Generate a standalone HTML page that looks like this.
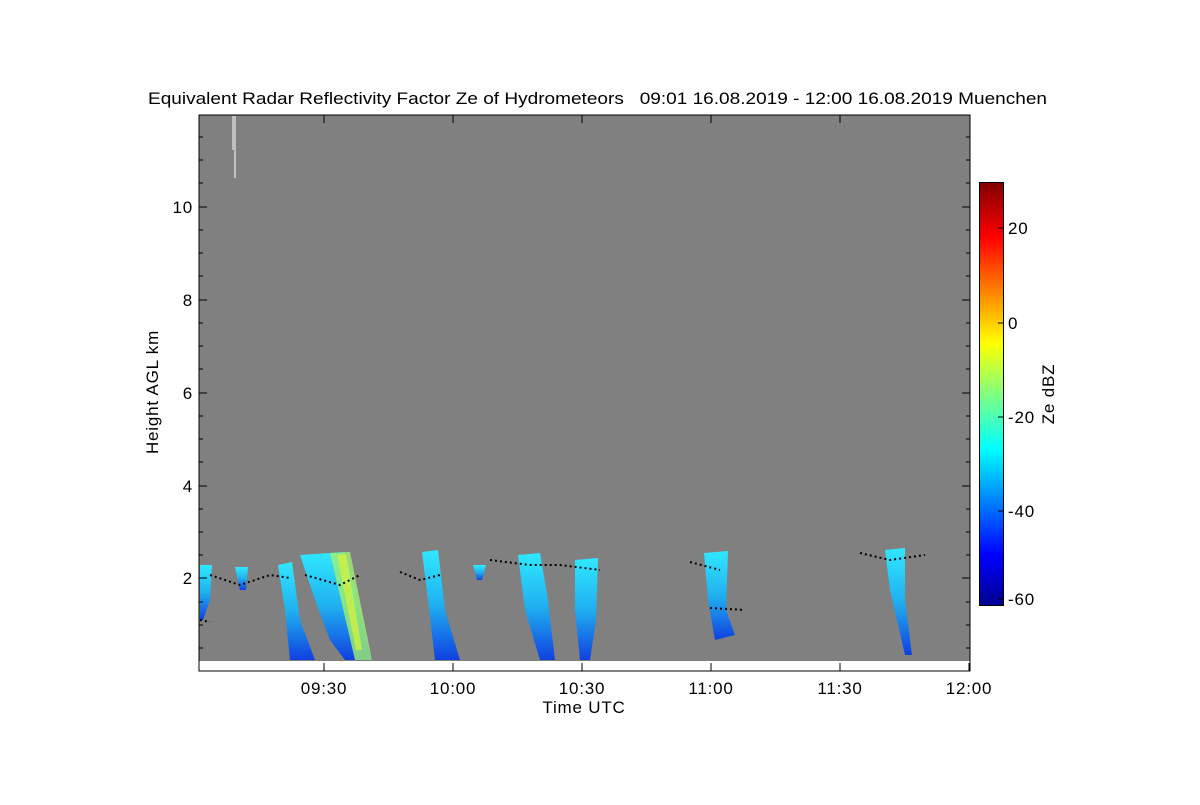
<!DOCTYPE html>
<html><head><style>
body{margin:0;background:#fff;width:1200px;height:800px;overflow:hidden;font-family:"Liberation Sans",sans-serif}
</style></head><body>
<svg width="1200" height="800" xmlns="http://www.w3.org/2000/svg" font-family="Liberation Sans, sans-serif" font-size="17" letter-spacing="0.8">
<defs>
<linearGradient id="jet" x1="0" y1="1" x2="0" y2="0">
<stop offset="0" stop-color="#00008f"/><stop offset="0.12" stop-color="#0000ff"/>
<stop offset="0.37" stop-color="#00ffff"/><stop offset="0.5" stop-color="#80ff80"/>
<stop offset="0.62" stop-color="#ffff00"/><stop offset="0.87" stop-color="#ff0000"/>
<stop offset="1" stop-color="#800000"/></linearGradient>
<linearGradient id="cl" x1="0" y1="0" x2="0" y2="1">
<stop offset="0" stop-color="#30e8ff"/><stop offset="0.5" stop-color="#20b0f0"/><stop offset="1" stop-color="#1040e0"/></linearGradient>
</defs>
<text x="148" y="104" textLength="899" lengthAdjust="spacingAndGlyphs" xml:space="preserve" letter-spacing="0">Equivalent Radar Reflectivity Factor Ze of Hydrometeors   09:01 16.08.2019 - 12:00 16.08.2019 Muenchen</text>
<rect x="199" y="115" width="771" height="556" fill="#fff"/>
<rect x="199" y="115" width="771" height="546" fill="#808080"/>
<line x1="233" y1="116" x2="233" y2="150" stroke="#fff"/>
<line x1="235" y1="116" x2="235" y2="178" stroke="#fff"/>
<g fill="url(#cl)">
<path d="M200 565 L212 565 L210 600 L203 620 L200 620Z"/>
<path d="M235 567 L248 567 L246 590 L240 590Z"/>
<path d="M278 565 L292 562 L300 620 L315 660 L290 660 L285 610Z"/>
<path d="M300 555 L345 552 L372 660 L345 660 L330 640 L315 600Z"/>
<path d="M422 552 L438 550 L445 610 L460 660 L435 660 L428 600Z"/>
<path d="M473 565 L486 565 L482 580 L477 580Z"/>
<path d="M518 555 L540 553 L548 600 L555 660 L540 660 L525 610Z"/>
<path d="M575 560 L598 558 L596 620 L590 660 L580 660 L575 610Z"/>
<path d="M704 553 L728 551 L726 610 L735 635 L715 640 L708 600Z"/>
<path d="M885 550 L905 548 L905 600 L912 655 L905 655 L890 590Z"/>
</g>
<path d="M330 553 L350 552 L372 660 L355 660Z" fill="#a0f070" opacity="0.8"/>
<path d="M337 555 L346 554 L362 650 L356 650Z" fill="#d0f040" opacity="0.8"/>
<g stroke="#000" stroke-width="2" stroke-dasharray="2 3" fill="none">
<path d="M210 575 L240 585 L270 575 L290 578"/><path d="M305 575 L340 585 L360 575"/>
<path d="M400 572 L420 580 L440 575"/><path d="M490 560 L530 565 L560 565 L600 570"/>
<path d="M690 562 L720 570"/><path d="M710 608 L745 610"/><path d="M860 553 L890 560 L925 555"/>
<path d="M200 620 L210 622"/>
</g>
<rect x="199" y="115" width="771" height="556" fill="none" stroke="#000"/>
<g stroke="#000">
<path d="M199 207h8M199 300h8M199 393h8M199 486h8M199 578h8M962 207h8M962 300h8M962 393h8M962 486h8M962 578h8"/>
<path d="M199 532h4M199 555h4M199 602h4M199 625h4M199 648h4M199 509h4M199 462h4M199 439h4M199 416h4M199 369h4M199 346h4M199 323h4M199 276h4M199 253h4M199 230h4M199 183h4M199 160h4M199 137h4"/>
<path d="M966 532h4M966 555h4M966 602h4M966 625h4M966 648h4M966 509h4M966 462h4M966 439h4M966 416h4M966 369h4M966 346h4M966 323h4M966 276h4M966 253h4M966 230h4M966 183h4M966 160h4M966 137h4"/>
<path d="M324 671v-8M453 671v-8M582 671v-8M711 671v-8M840 671v-8M969 671v-8M324 115v8M453 115v8M582 115v8M711 115v8M840 115v8"/>
</g>
<g>
<text x="193" y="213" text-anchor="end">10</text><text x="193" y="306" text-anchor="end">8</text>
<text x="193" y="399" text-anchor="end">6</text><text x="193" y="492" text-anchor="end">4</text>
<text x="193" y="584" text-anchor="end">2</text>
<text x="324" y="694" text-anchor="middle">09:30</text><text x="453" y="694" text-anchor="middle">10:00</text>
<text x="582" y="694" text-anchor="middle">10:30</text><text x="711" y="694" text-anchor="middle">11:00</text>
<text x="840" y="694" text-anchor="middle">11:30</text><text x="969" y="694" text-anchor="middle">12:00</text>
<text x="584" y="713" text-anchor="middle">Time UTC</text>
<text transform="translate(158 392) rotate(-90)" text-anchor="middle">Height AGL km</text>
</g>
<rect x="979.5" y="182.5" width="24" height="423" fill="url(#jet)" stroke="#000"/>
<g stroke="#000"><path d="M998 228h5M998 323h5M998 417h5M998 511h5M998 599h5"/></g>
<text x="1008" y="234">20</text><text x="1008" y="329">0</text><text x="1008" y="423">-20</text>
<text x="1008" y="517">-40</text><text x="1008" y="605">-60</text>
<text transform="translate(1054 394) rotate(-90)" text-anchor="middle">Ze dBZ</text>
</svg>
</body></html>
